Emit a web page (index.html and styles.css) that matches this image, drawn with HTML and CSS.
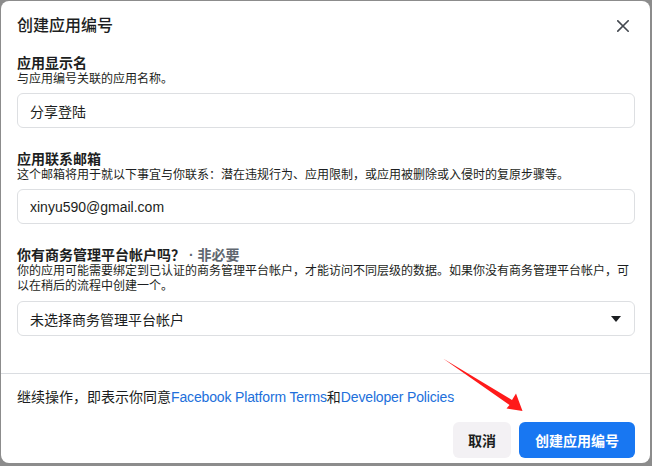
FILE: index.html
```html
<!DOCTYPE html>
<html lang="zh-CN">
<head>
<meta charset="utf-8">
<title>创建应用编号</title>
<link rel="stylesheet" href="styles.css">
</head>
<body>
<div class="dialog">
  <div class="header">
    <h1 class="title">创建应用编号</h1>
    <button class="close" aria-label="关闭">
      <svg width="12" height="12" viewBox="0 0 12 12"><path d="M0.8 0.8 L11.2 11.2 M11.2 0.8 L0.8 11.2" stroke="#444950" stroke-width="1.6" fill="none" stroke-linecap="square"/></svg>
    </button>
  </div>
  <div class="content">
    <div class="group first">
      <div class="label">应用显示名</div>
      <div class="help">与应用编号关联的应用名称。</div>
      <input class="field" type="text" value="分享登陆">
    </div>
    <div class="group">
      <div class="label">应用联系邮箱</div>
      <div class="help">这个邮箱将用于就以下事宜与你联系：潜在违规行为、应用限制，或应用被删除或入侵时的复原步骤等。</div>
      <input class="field" type="text" value="xinyu590@gmail.com">
    </div>
    <div class="group">
      <div class="label">你有商务管理平台帐户吗？ <span class="optional">· 非必要</span></div>
      <div class="help">你的应用可能需要绑定到已认证的商务管理平台帐户，才能访问不同层级的数据。如果你没有商务管理平台帐户，可以在稍后的流程中创建一个。</div>
      <div class="field select">
        <span>未选择商务管理平台帐户</span>
        <svg class="caret" width="10" height="6" viewBox="0 0 10 6"><path d="M0 0 H10 L5 6 Z" fill="#1c1e21"/></svg>
      </div>
    </div>
  </div>
  <div class="footer">
    <div class="terms">继续操作，即表示你同意<a href="#">Facebook Platform Terms</a>和<a href="#">Developer Policies</a></div>
    <div class="actions">
      <button class="btn secondary">取消</button>
      <button class="btn primary">创建应用编号</button>
    </div>
  </div>
</div>
<svg class="annotation" width="652" height="466" viewBox="0 0 652 466">
  <polygon points="443,358.5 512,400 516,393.5 522.5,411 506.5,408.5 509.5,405 " fill="#ff1a1a"/>
</svg>
</body>
</html>
```
FILE: styles.css
```css
html, body {
  margin: 0;
  padding: 0;
}
body {
  background: #8c8c8c;
  width: 652px;
  height: 466px;
  overflow: hidden;
  position: relative;
  font-family: "Liberation Sans", "Noto Sans CJK SC", sans-serif;
  color: #1c1e21;
}
.dialog {
  margin: 1px 0 0 1px;
  width: 649px;
  height: 462px;
  background: #ffffff;
  border-radius: 8px;
  display: flex;
  flex-direction: column;
  box-sizing: border-box;
}
.header {
  display: flex;
  align-items: center;
  justify-content: space-between;
  padding: 12px 15px 0 16px;
  height: 26px;
  box-sizing: content-box;
}
.title {
  margin: 0;
  font-size: 16px;
  line-height: 26px;
  font-weight: 500;
  color: #1c1e21;
}
.close {
  width: 24px;
  height: 24px;
  border: 0;
  padding: 0;
  background: transparent;
  display: flex;
  align-items: center;
  justify-content: center;
}
.content {
  flex: 1;
  padding: 0 15px 0 16px;
}
.group {
  margin-top: 22px;
}
.group.first {
  margin-top: 15px;
}
.label {
  font-size: 14px;
  line-height: 18px;
  font-weight: 700;
  color: #1c1e21;
}
.optional {
  color: #606770;
}
.help {
  font-size: 12px;
  line-height: 15px;
  color: #1c1e21;
}
.field {
  display: block;
  width: 100%;
  height: 35px;
  margin-top: 6px;
  box-sizing: border-box;
  border: 1px solid #dddfe2;
  border-radius: 6px;
  padding: 0 12px;
  font-family: "Liberation Sans", "Noto Sans CJK SC", sans-serif;
  font-size: 14px;
  color: #1c1e21;
  background: #ffffff;
  outline: none;
}
.group:nth-child(3) .field {
  margin-top: 7px;
}
.select {
  display: flex;
  align-items: center;
  justify-content: space-between;
  padding: 0 13px 0 12px;
}
.caret {
  display: block;
}
.footer {
  border-top: 1px solid #dadde1;
  padding: 13px 15px 5px 16px;
}
.terms {
  font-size: 14px;
  line-height: 20px;
  color: #1c1e21;
}
.terms a {
  color: #216fdb;
  text-decoration: none;
  letter-spacing: -0.15px;
}
.actions {
  margin-top: 15px;
  display: flex;
  justify-content: flex-end;
  gap: 8px;
}
.btn {
  height: 36px;
  border: 0;
  border-radius: 6px;
  font-family: "Liberation Sans", "Noto Sans CJK SC", sans-serif;
  font-size: 14px;
  font-weight: 700;
  padding: 0 16px;
}
.btn.secondary {
  background: #f3f1f4;
  color: #1c1e21;
  padding: 0 15px;
}
.btn.primary {
  background: #1877f2;
  color: #ffffff;
}
.annotation {
  position: absolute;
  left: 0;
  top: 0;
  pointer-events: none;
}
```
